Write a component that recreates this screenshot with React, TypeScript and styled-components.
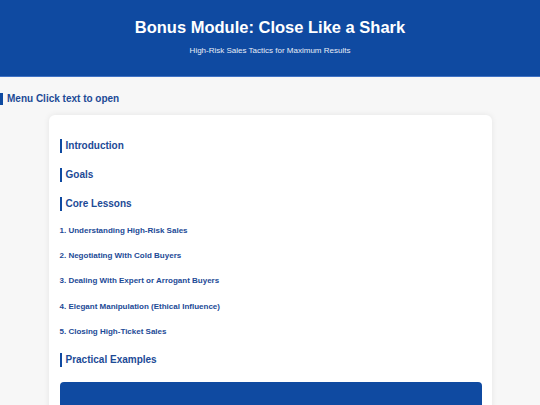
import styled, { createGlobalStyle } from 'styled-components'

const GlobalStyle = createGlobalStyle`
  html, body {
    margin: 0;
    padding: 0;
    background: #f7f7f7;
    font-family: 'Liberation Sans', Arial, sans-serif;
  }
`

const blue = '#0f4aa1'
const textBlue = '#1c4a96'

const Header = styled.header`
  background: ${blue};
  color: #fff;
  text-align: center;
  height: 77px;
  box-sizing: border-box;
  padding-top: 17px;
  border-bottom: 1px solid #3f72c4;
`

const Title = styled.h1`
  margin: 0;
  font-size: 16.5px;
  font-weight: bold;
  line-height: 20px;
`

const Subtitle = styled.p`
  margin: 9px 0 0;
  font-size: 8px;
  line-height: 10px;
  color: #e6ecf7;
`

const MenuTitle = styled.h2`
  margin: 16px 0 0;
  padding-left: 4px;
  border-left: 3px solid ${blue};
  font-size: 10px;
  line-height: 12px;
  color: ${textBlue};
  font-weight: bold;
`

const Card = styled.main`
  width: 443px;
  margin: 10px auto 0;
  background: #fff;
  border-radius: 6px;
  box-shadow: 0 0 6px rgba(0, 0, 0, 0.08);
  padding: 24px 10px 0 11px;
  box-sizing: border-box;
  height: 300px;
`

const SectionTitle = styled.h3`
  margin: 0 0 15px;
  padding-left: 4px;
  border-left: 2.5px solid ${blue};
  font-size: 10px;
  line-height: 14px;
  color: ${textBlue};
  font-weight: bold;
`

const LessonList = styled.ul`
  list-style: none;
  margin: 1px 0 16px;
  padding: 0;
  display: flex;
  flex-direction: column;
  gap: 15.2px;
`

const Lesson = styled.li`
  font-size: 8px;
  line-height: 10px;
  font-weight: bold;
  color: ${textBlue};
`

const ExampleBox = styled.div`
  margin-top: 7px;
  background: ${blue};
  border-radius: 4px;
  height: 60px;
`

const lessons = [
  '1. Understanding High-Risk Sales',
  '2. Negotiating With Cold Buyers',
  '3. Dealing With Expert or Arrogant Buyers',
  '4. Elegant Manipulation (Ethical Influence)',
  '5. Closing High-Ticket Sales',
]

export default function App() {
  return (
    <>
      <GlobalStyle />
      <Header>
        <Title>Bonus Module: Close Like a Shark</Title>
        <Subtitle>High-Risk Sales Tactics for Maximum Results</Subtitle>
      </Header>
      <MenuTitle>Menu Click text to open</MenuTitle>
      <Card>
        <SectionTitle>Introduction</SectionTitle>
        <SectionTitle>Goals</SectionTitle>
        <SectionTitle>Core Lessons</SectionTitle>
        <LessonList>
          {lessons.map((l) => (
            <Lesson key={l}>{l}</Lesson>
          ))}
        </LessonList>
        <SectionTitle>Practical Examples</SectionTitle>
        <ExampleBox />
      </Card>
    </>
  )
}
